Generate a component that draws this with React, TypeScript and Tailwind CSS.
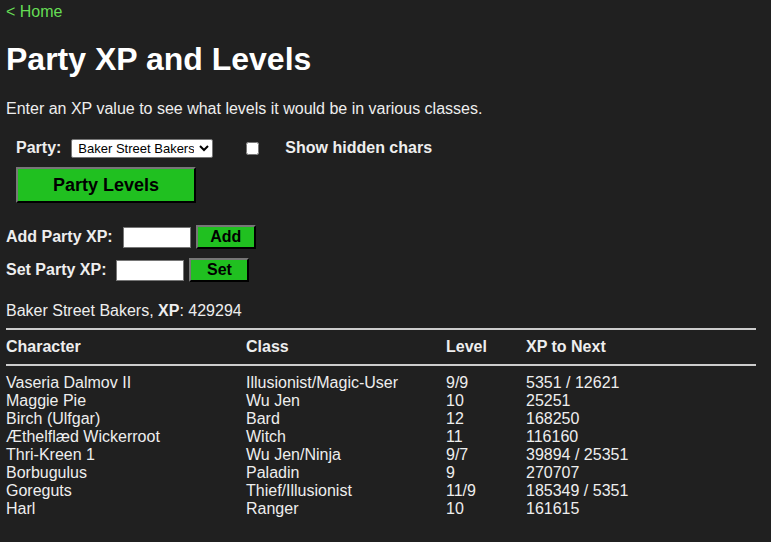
import { useState } from 'react';

interface Char {
  name: string;
  cls: string;
  level: string;
  next: string;
}

const chars: Char[] = [
  { name: 'Vaseria Dalmov II', cls: 'Illusionist/Magic-User', level: '9/9', next: '5351 / 12621' },
  { name: 'Maggie Pie', cls: 'Wu Jen', level: '10', next: '25251' },
  { name: 'Birch (Ulfgar)', cls: 'Bard', level: '12', next: '168250' },
  { name: 'Æthelflæd Wickerroot', cls: 'Witch', level: '11', next: '116160' },
  { name: 'Thri-Kreen 1', cls: 'Wu Jen/Ninja', level: '9/7', next: '39894 / 25351' },
  { name: 'Borbugulus', cls: 'Paladin', level: '9', next: '270707' },
  { name: 'Goreguts', cls: 'Thief/Illusionist', level: '11/9', next: '185349 / 5351' },
  { name: 'Harl', cls: 'Ranger', level: '10', next: '161615' },
];

const btn =
  'bg-[#20c020] text-black font-bold border-2 border-t-[#777] border-l-[#777] border-b-black border-r-black';

export default function App() {
  const [hidden, setHidden] = useState(false);

  return (
    <main className="min-h-[542px] bg-[#202020] text-[#eeeeee] px-[6px] pb-6 font-['Liberation_Sans',Arial,sans-serif] text-[16px] leading-[18px]">
      <a href="#" className="text-[#66dd55] block pt-[3px]">&lt; Home</a>

      <h1 className="text-[32px] leading-[37px] font-bold text-white mt-[20px]">Party XP and Levels</h1>

      <p className="mt-[22px]">Enter an XP value to see what levels it would be in various classes.</p>

      <div className="ml-[10px] mt-[20px]">
        <div className="flex items-center h-[20px]">
          <span className="font-bold">Party:</span>
          <select className="ml-[10px] bg-white text-black text-[13px] leading-[15px] h-[19px] w-[142px] border border-[#767676] rounded-[2px] px-[2px]">
            <option>Baker Street Bakers</option>
          </select>
          <input
            type="checkbox"
            checked={hidden}
            onChange={e => setHidden(e.target.checked)}
            className="ml-[33px] w-[13px] h-[13px]"
          />
          <span className="font-bold ml-[26px]">Show hidden chars</span>
        </div>
        <button className={`${btn} mt-[9px] w-[180px] h-[36px] text-[18px]`}>Party Levels</button>
      </div>

      <div className="mt-[22px] flex items-center h-[24px]">
        <span className="font-bold">Add Party XP:</span>
        <input className="ml-[10px] w-[68px] h-[21px] bg-white border border-[#767676] text-black" />
        <button className={`${btn} ml-[5px] w-[60px] h-[24px]`}>Add</button>
      </div>

      <div className="mt-[9px] flex items-center h-[24px]">
        <span className="font-bold">Set Party XP:</span>
        <input className="ml-[10px] w-[68px] h-[21px] bg-white border border-[#767676] text-black" />
        <button className={`${btn} ml-[5px] w-[60px] h-[24px]`}>Set</button>
      </div>

      <div className="mt-[20px]">
        Baker Street Bakers, <b>XP</b>: 429294
      </div>

      <div className="mr-[9px]">
        <div className="mt-[8px] border-t-2 border-[#cccccc]" />
        <div className="grid grid-cols-[240px_200px_80px_1fr] font-bold py-[8px]">
          <div>Character</div>
          <div>Class</div>
          <div>Level</div>
          <div>XP to Next</div>
        </div>
        <div className="border-t-2 border-[#cccccc]" />
        <div className="pt-[8px]">
          {chars.map(c => (
            <div key={c.name} className="grid grid-cols-[240px_200px_80px_1fr]">
              <div>{c.name}</div>
              <div>{c.cls}</div>
              <div>{c.level}</div>
              <div>{c.next}</div>
            </div>
          ))}
        </div>
      </div>
    </main>
  );
}
